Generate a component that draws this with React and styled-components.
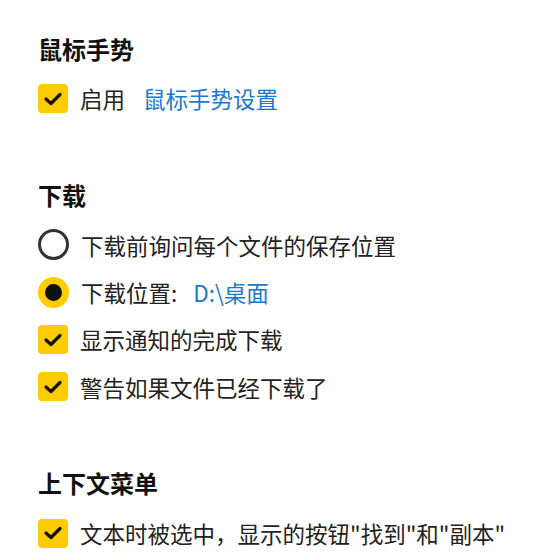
import React from 'react';
import styled, { createGlobalStyle } from 'styled-components';

const GlobalStyle = createGlobalStyle`
    html, body {
        margin: 0;
        padding: 0;
        background: #ffffff;
    }
    body {
        font-family: "Noto Sans CJK SC", "Noto Sans", "Liberation Sans", sans-serif;
        color: #222222;
    }
`;

const Page = styled.div`
    padding: 34px 38px 0;
`;

const Section = styled.section`
    margin-bottom: 58px;
    &:last-child {
        margin-bottom: 0;
    }
`;

const Heading = styled.h2`
    margin: 0 0 11px;
    font-size: 24px;
    font-weight: 700;
    line-height: 30px;
    color: #111111;
`;

const Row = styled.label`
    display: flex;
    align-items: center;
    height: 47.3px;
    gap: 12px;
    font-size: 22.5px;
    line-height: 1;
`;

const Box = styled.span`
    flex: none;
    width: 30px;
    height: 29px;
    border-radius: 4px;
    background: #ffcc00;
    display: flex;
    align-items: center;
    justify-content: center;
`;

const Radio = styled.span`
    flex: none;
    box-sizing: border-box;
    width: 31px;
    height: 31px;
    border-radius: 50%;
    border: ${(p) => (p.$on ? '7px solid #ffcc00' : '3px solid #333333')};
    background: ${(p) => (p.$on ? '#111111' : '#ffffff')};
`;

const Link = styled.a`
    margin-left: ${(p) => p.$gap || 6}px;
    color: #1b78cc;
    text-decoration: none;
`;

const Check = () => (
    <Box>
        <svg width="18" height="14" viewBox="0 0 18 14">
            <path d="M2 7 L7 11.5 L16 2.5" fill="none" stroke="#111" strokeWidth="3.2" strokeLinecap="round" strokeLinejoin="round" />
        </svg>
    </Box>
);

export default function App() {
    return (
        <Page>
            <GlobalStyle />
            <Section>
                <Heading>鼠标手势</Heading>
                <Row>
                    <Check />
                    <span>启用</span>
                    <Link href="#" $gap={6}>鼠标手势设置</Link>
                </Row>
            </Section>
            <Section>
                <Heading>下载</Heading>
                <Row>
                    <Radio />
                    <span>下载前询问每个文件的保存位置</span>
                </Row>
                <Row>
                    <Radio $on />
                    <span>下载位置:</span>
                    <Link href="#" $gap={4}>D:\桌面</Link>
                </Row>
                <Row>
                    <Check />
                    <span>显示通知的完成下载</span>
                </Row>
                <Row>
                    <Check />
                    <span>警告如果文件已经下载了</span>
                </Row>
            </Section>
            <Section>
                <Heading>上下文菜单</Heading>
                <Row>
                    <Check />
                    <span>文本时被选中，显示的按钮"找到"和"副本"</span>
                </Row>
            </Section>
        </Page>
    );
}
